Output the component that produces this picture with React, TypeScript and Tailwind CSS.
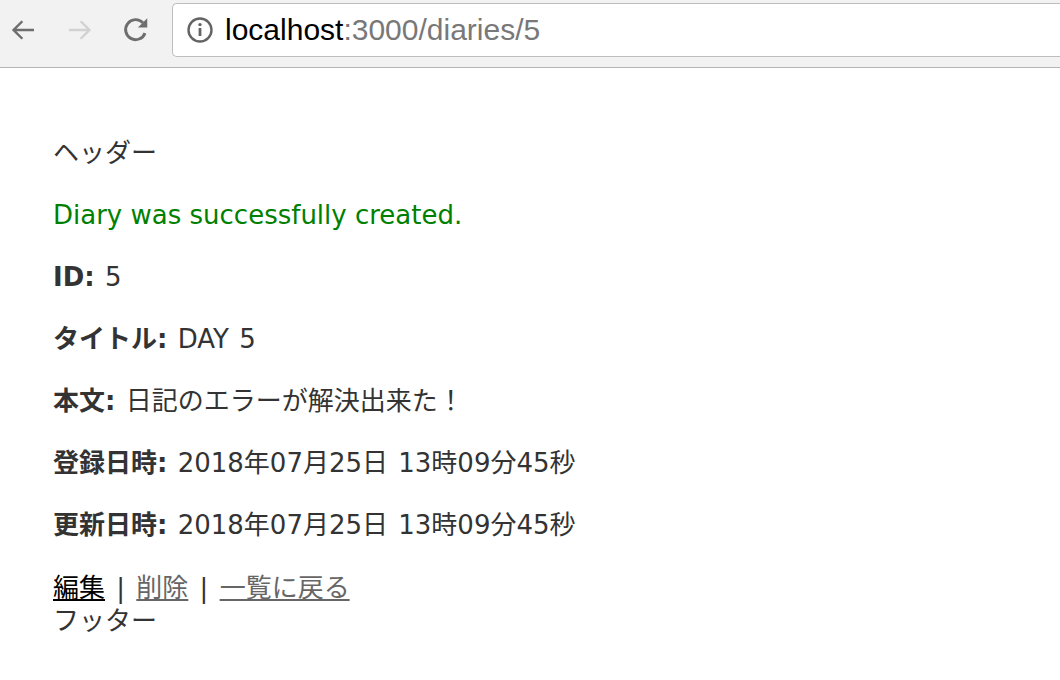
export default function App() {
  const body = "font-['DejaVu_Sans','Noto_Sans_CJK_JP',sans-serif]";
  return (
    <div className="min-h-[680px] w-[1060px] bg-white">
      {/* browser chrome */}
      <div className="h-[68px] bg-[#f2f2f2] border-b border-[#b4b4b4] flex items-start pt-[3px]">
        <div className="flex items-center h-[54px]">
          <svg className="ml-[9px]" width="29" height="28" viewBox="0 0 24 24" fill="none" stroke="#6e6e6e" strokeWidth="2.1">
            <path d="M21 12H4M11 4.5 3.5 12l7.5 7.5" />
          </svg>
          <svg className="ml-[27px]" width="29" height="28" viewBox="0 0 24 24" fill="none" stroke="#d2d2d2" strokeWidth="2.1">
            <path d="M3 12h17M13 4.5l7.5 7.5-7.5 7.5" />
          </svg>
          <svg className="ml-[27px]" width="30" height="30" viewBox="0 0 24 24" fill="none">
            <path d="M19.2 14.5A8 8 0 1 1 17.5 6.2" stroke="#6e6e6e" strokeWidth="2.3" />
            <path d="M21 2.5V10h-7.5z" fill="#6e6e6e" />
          </svg>
        </div>
        <div className="ml-[21px] flex-1 h-[54px] bg-white border border-[#bdbdbd] border-r-0 rounded-l-[5px] flex items-center">
          <svg className="ml-[13px]" width="28" height="28" viewBox="0 0 28 28" fill="none">
            <circle cx="14" cy="14" r="11.5" stroke="#646464" strokeWidth="2.4" />
            <rect x="12.6" y="12" width="2.8" height="8" fill="#646464" />
            <circle cx="14" cy="8.6" r="1.7" fill="#646464" />
          </svg>
          <span className="ml-[11px] text-[30px] leading-none font-['Liberation_Sans',sans-serif] text-black">
            localhost<span className="text-[#787878]">:3000/diaries/5</span>
          </span>
        </div>
      </div>

      {/* page */}
      <div className={`${body} text-[#333] text-[26px] leading-[33px] pl-[53px] pt-[69px] [word-spacing:2px]`}>
        <div>ヘッダー</div>
        <p className="mt-[29px] text-[#008000] [word-spacing:0px]">Diary was successfully created.</p>
        <p className="mt-[29px]">
          <strong>ID:</strong> 5
        </p>
        <p className="mt-[29px]">
          <strong>タイトル:</strong> DAY 5
        </p>
        <p className="mt-[29px]">
          <strong>本文:</strong> 日記のエラーが解決出来た！
        </p>
        <p className="mt-[29px]">
          <strong>登録日時:</strong> 2018年07月25日 13時09分45秒
        </p>
        <p className="mt-[29px]">
          <strong>更新日時:</strong> 2018年07月25日 13時09分45秒
        </p>
        <div className="mt-[30px] [word-spacing:3px]">
          <a href="#" className="text-black underline">編集</a> |{" "}
          <a href="#" className="text-[#666] underline">削除</a> |{" "}
          <a href="#" className="text-[#666] underline">一覧に戻る</a>
        </div>
        <div>フッター</div>
      </div>
    </div>
  );
}
